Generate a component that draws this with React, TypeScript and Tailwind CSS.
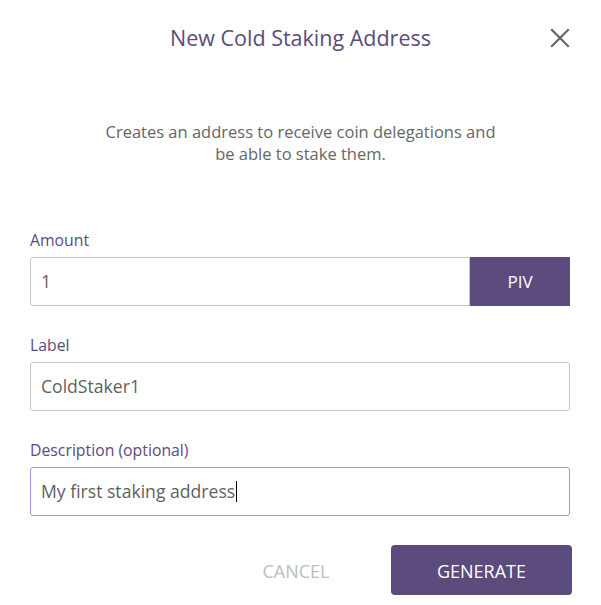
import React from 'react';

const Field = ({ label, value, focused, caret }: { label: string; value: string; focused?: boolean; caret?: boolean }) => (
  <div className="flex flex-col">
    <div className="h-[20px] leading-[20px] text-[15.8px] text-[#5c4b7d]">{label}</div>
    <div
      className={`mt-[7px] h-[49px] flex items-center px-[10px] rounded-[3px] border bg-white text-[17.6px] text-[#5f5f5f] ${
        focused ? 'border-[#b08cf7]' : 'border-[#c6c6c6]'
      }`}
    >
      <span>{value}</span>
      {caret && <span className="ml-[1px] w-[1px] h-[21px] bg-black" />}
    </div>
  </div>
);

export default function App() {
  return (
    <div className="w-[601px] h-[605px] bg-white font-['Open_Sans',sans-serif] flex flex-col">
      <div className="grid grid-cols-[1fr_auto_1fr] items-center pt-[24px] pr-[31px]">
        <div />
        <div className="h-[28px] leading-[28px] text-[21.5px] text-[#5c4b7d] pl-[31px]">New Cold Staking Address</div>
        <div className="flex justify-end">
          <svg width="20" height="20" viewBox="0 0 20 20" fill="none" stroke="#666666" strokeWidth="2.2" strokeLinecap="square">
            <path d="M2 2 L18 18 M18 2 L2 18" />
          </svg>
        </div>
      </div>

      <p className="mt-[69px] text-center text-[16.5px] leading-[22px] text-[#666666]">
        Creates an address to receive coin delegations and
        <br />
        be able to stake them.
      </p>

      <div className="mt-[65px] px-[30px] pr-[31px] flex flex-col gap-[29px]">
        <div className="flex flex-col">
          <div className="h-[20px] leading-[20px] text-[15.8px] text-[#5c4b7d]">Amount</div>
          <div className="mt-[7px] flex h-[49px]">
            <div className="flex-1 flex items-center px-[10px] rounded-l-[3px] border border-[#c6c6c6] text-[17.6px] text-[#5f5f5f]">1</div>
            <div className="w-[100px] bg-[#5c4b7d] flex items-center justify-center text-white text-[17px]">PIV</div>
          </div>
        </div>
        <Field label="Label" value="ColdStaker1" />
        <Field label="Description (optional)" value="My first staking address" focused caret />
      </div>

      <div className="mt-[29px] flex justify-end pr-[29px] gap-[30px]">
        <button className="w-[130px] h-[50px] pt-[3px] text-[18px] text-[#bdbdbd]">CANCEL</button>
        <button className="w-[181px] h-[50px] pt-[3px] rounded-[4px] bg-[#5c4b7d] text-white text-[18px]">GENERATE</button>
      </div>
    </div>
  );
}
